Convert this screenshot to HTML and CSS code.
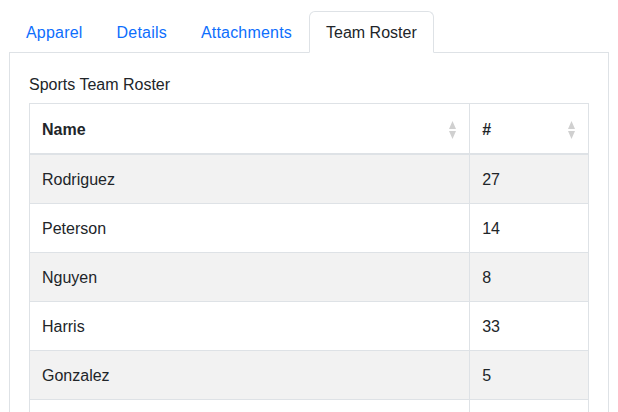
FILE: index.html
```html
<!DOCTYPE html>
<html>
<head>
<meta charset="utf-8">
<link rel="stylesheet" href="styles.css">
</head>
<body>
<div class="wrap">
  <ul class="tabs">
    <li><a class="tab">Apparel</a></li>
    <li><a class="tab">Details</a></li>
    <li><a class="tab">Attachments</a></li>
    <li><a class="tab active">Team Roster</a></li>
  </ul>
  <div class="panel">
    <div class="caption">Sports Team Roster</div>
    <table class="roster">
      <thead>
        <tr>
          <th class="col-name"><div class="th-in"><span>Name</span><svg class="sort" width="7" height="18" viewBox="0 0 7 18"><path d="M0 8 L3.5 0 L7 8 Z M0 10 L3.5 18 L7 10 Z" fill="#d0d0d0"/></svg></div></th>
          <th class="col-num"><div class="th-in"><span>#</span><svg class="sort" width="7" height="18" viewBox="0 0 7 18"><path d="M0 8 L3.5 0 L7 8 Z M0 10 L3.5 18 L7 10 Z" fill="#d0d0d0"/></svg></div></th>
        </tr>
      </thead>
      <tbody>
        <tr class="odd"><td>Rodriguez</td><td>27</td></tr>
        <tr><td>Peterson</td><td>14</td></tr>
        <tr class="odd"><td>Nguyen</td><td>8</td></tr>
        <tr><td>Harris</td><td>33</td></tr>
        <tr class="odd"><td>Gonzalez</td><td>5</td></tr>
        <tr><td>&nbsp;</td><td>&nbsp;</td></tr>
      </tbody>
    </table>
  </div>
</div>
</body>
</html>
```
FILE: styles.css
```css
html, body {
  margin: 0;
  padding: 0;
  background: #fff;
}
body {
  font-family: "Liberation Sans", Arial, Helvetica, sans-serif;
  font-size: 16px;
  color: #212529;
  overflow: hidden;
  height: 412px;
}
.wrap {
  padding: 11px 9px 0;
}
.tabs {
  list-style: none;
  margin: 0;
  padding: 0;
  display: flex;
  border-bottom: 1px solid #dee2e6;
}
.tabs li {
  margin-bottom: -1px;
}
.tab {
  display: block;
  padding: 9px 16px 7px;
  line-height: 24px;
  letter-spacing: 0.2px;
  border: 1px solid transparent;
  border-radius: 6px 6px 0 0;
  color: #0d6efd;
  text-decoration: none;
  cursor: pointer;
}
.tab.active {
  color: #212529;
  background: #fff;
  letter-spacing: 0;
  border-color: #dee2e6 #dee2e6 #fff;
}
.panel {
  border: 1px solid #dee2e6;
  border-top: none;
  padding: 20px 19px 19px;
}
.caption {
  line-height: 24px;
  margin-bottom: 6px;
}
.roster {
  width: 560px;
  border-collapse: collapse;
  border: 1px solid #dee2e6;
  font-size: 16px;
}
.roster th, .roster td {
  border: 1px solid #dee2e6;
  padding: 13px 12px 11px;
  line-height: 24px;
  text-align: left;
}
.roster th {
  padding-top: 14px;
  padding-bottom: 11px;
  border-bottom: 2px solid #dee2e6;
  font-weight: bold;
}
.col-name { width: 416px; }
.col-num { width: 94px; }
.th-in {
  display: flex;
  align-items: center;
  justify-content: space-between;
  padding-right: 1px;
}
.sort { display: block; }
.roster tr.odd td {
  background: #f2f2f2;
}
```
